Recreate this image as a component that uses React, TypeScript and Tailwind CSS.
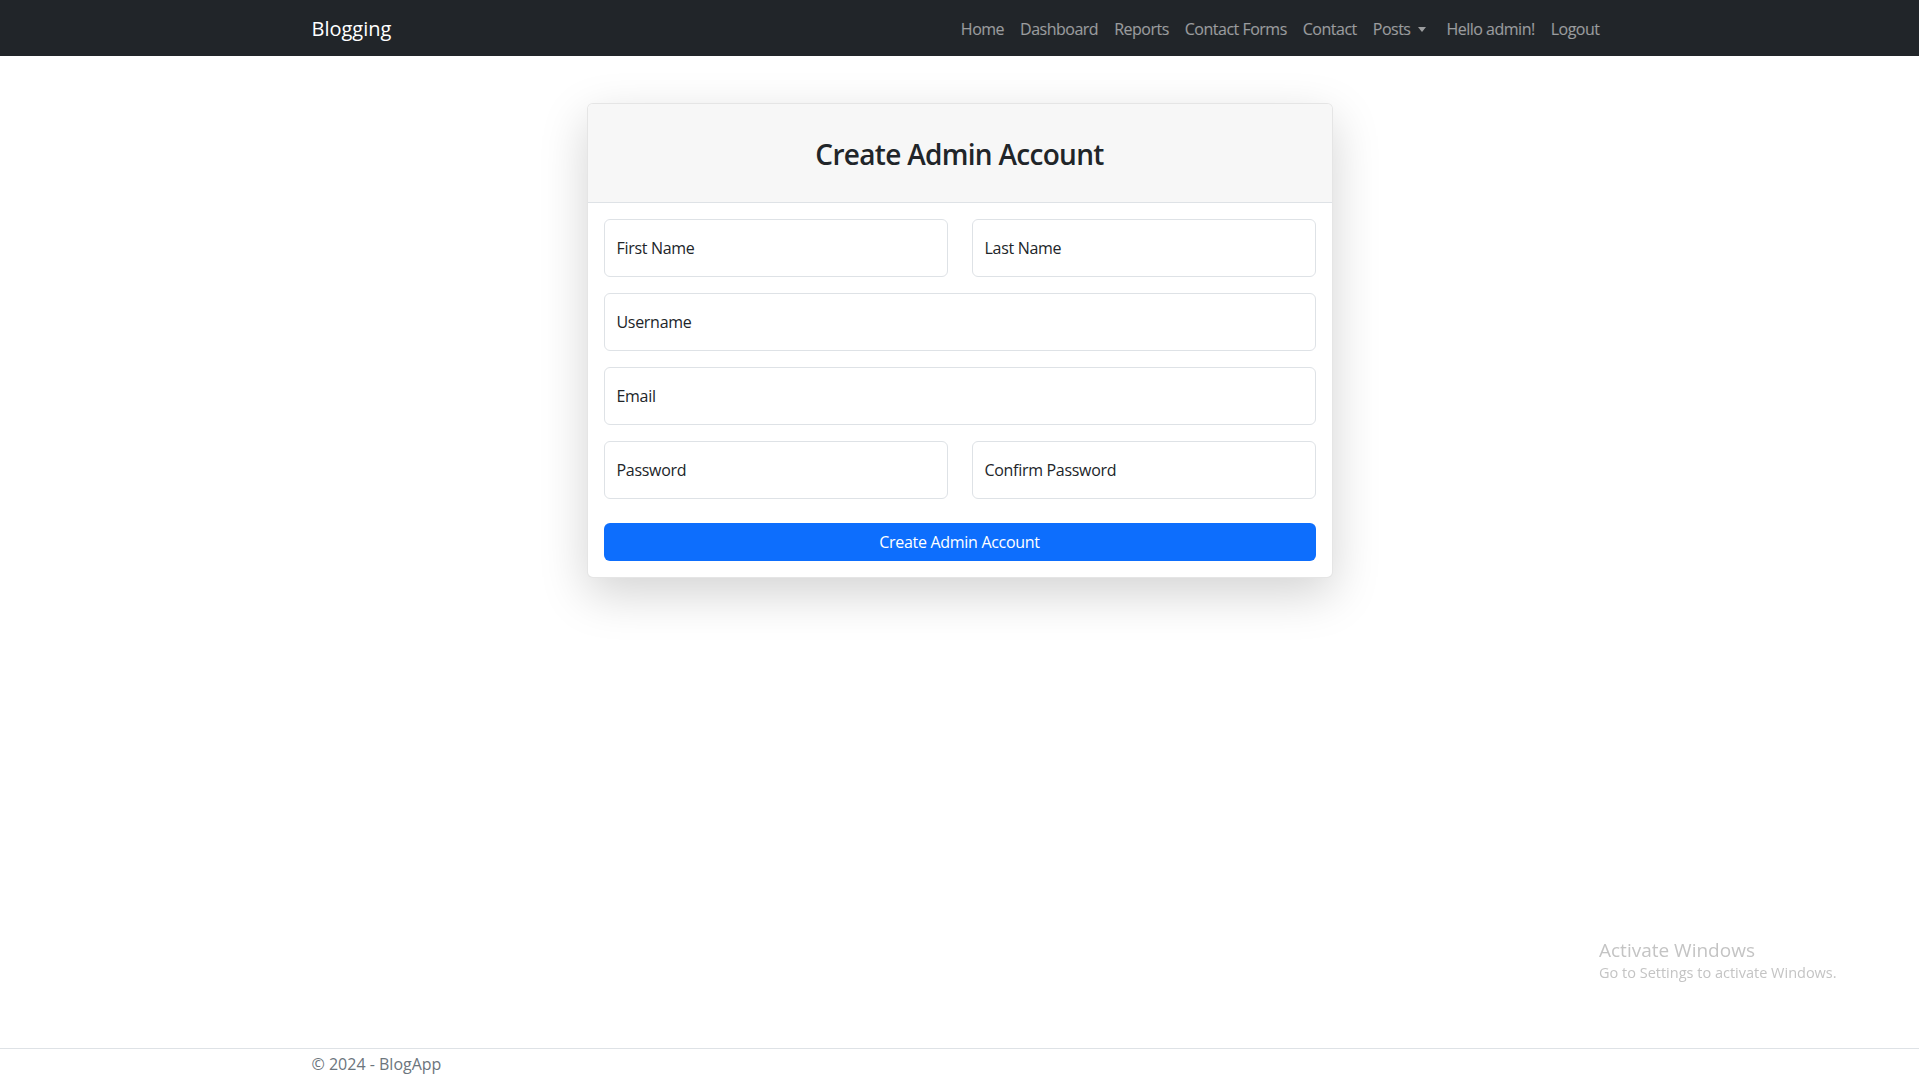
import React from "react";

const navLinks = ["Home", "Dashboard", "Reports", "Contact Forms", "Contact"];

const Field = ({ label }: { label: string }) => (
  <label className="flex items-center h-[58px] px-3 border border-[#dee2e6] rounded-md bg-white text-base tracking-[-0.3px] text-[#212529]">
    {label}
  </label>
);

const App = () => {
  return (
    <div className="min-h-screen flex flex-col bg-white text-[#212529] font-['Open_Sans',sans-serif]">
      {/* Navbar */}
      <nav className="bg-[#212529] h-14 shrink-0">
        <div className="w-[1320px] mx-auto px-3 pt-[2px] h-full flex items-center justify-between">
          <span className="text-[20px] text-white">Blogging</span>
          <ul className="flex items-center tracking-[-0.5px]">
            {navLinks.map((link) => (
              <li key={link} className="px-2 text-base text-white/55">
                {link}
              </li>
            ))}
            <li className="px-2 text-base text-white/55 flex items-center">
              Posts
              <span className="ml-[8px] w-0 h-0 border-x-[4.5px] border-x-transparent border-t-[5px] border-t-white/55" />
            </li>
            <li className="px-2 ml-1 text-base text-white/55">Hello admin!</li>
            <li className="px-2 text-base text-white/55">Logout</li>
          </ul>
        </div>
      </nav>

      {/* Main */}
      <main className="flex-1">
        <div className="w-[1320px] mx-auto px-3 pt-[47px]">
          <div className="w-[746px] mx-auto bg-white border border-black/10 rounded-md shadow-[0_1rem_3rem_rgba(0,0,0,0.175)] overflow-hidden">
            {/* Card Header */}
            <div className="h-[99px] pt-[34px] bg-[#f7f7f7] border-b border-[#dee2e6] text-center">
              <h3 className="text-[28px] leading-[1.2] font-semibold tracking-[-0.7px]">Create Admin Account</h3>
            </div>

            {/* Card Body */}
            <div className="p-4">
              <div className="grid grid-cols-2 gap-x-6 mb-4">
                <Field label="First Name" />
                <Field label="Last Name" />
              </div>
              <div className="mb-4">
                <Field label="Username" />
              </div>
              <div className="mb-4">
                <Field label="Email" />
              </div>
              <div className="grid grid-cols-2 gap-x-6 mb-4">
                <Field label="Password" />
                <Field label="Confirm Password" />
              </div>
              <button className="mt-2 w-full h-[38px] rounded-md bg-[#0d6efd] text-white text-base tracking-[-0.3px]">
                Create Admin Account
              </button>
            </div>
          </div>
        </div>
      </main>

      {/* Footer */}
      <footer className="border-t border-[#dee2e6] h-[31px] shrink-0">
        <div className="w-[1320px] mx-auto px-3 leading-[30px] text-base text-[#6c757d]">
          © 2024 - BlogApp
        </div>
      </footer>

      {/* Windows watermark */}
      <div className="fixed left-[1599px] top-[938px] text-[#c4c4c4] pointer-events-none">
        <div className="text-[19px] leading-[25px]">Activate Windows</div>
        <div className="text-[14.5px] leading-[20px]">Go to Settings to activate Windows.</div>
      </div>
    </div>
  );
};

export default App;
